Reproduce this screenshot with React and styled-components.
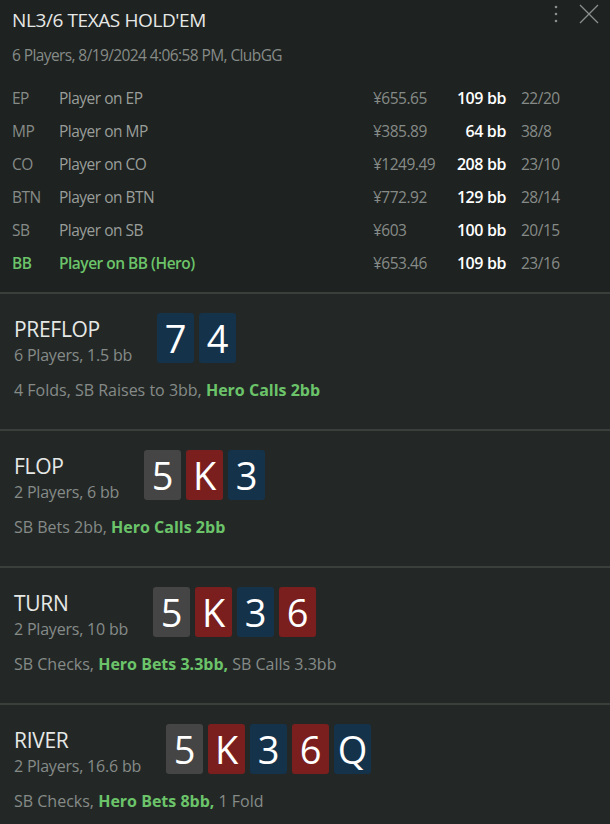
import React from "react";
import styled, {createGlobalStyle} from "styled-components";

const GlobalStyle = createGlobalStyle`
  html, body {
    margin: 0;
    padding: 0;
    background: #1e2220;
  }
  body {
    font-family: "Open Sans", "Noto Sans", sans-serif;
  }
`;

const Panel = styled.div`
  width: 100%;
  height: 824px;
  background: #1e2220;
  overflow: hidden;
  display: flex;
  flex-direction: column;
`;

const Header = styled.div`
  position: relative;
  padding: 6px 12px 13px 12px;
  border-bottom: 2px solid #3a3f3c;
`;

const Title = styled.div`
  font-size: 19px;
  color: #e6e8e6;
  line-height: 28px;
  letter-spacing: -0.4px;
`;

const Subtitle = styled.div`
  font-size: 15.5px;
  color: #868b88;
  line-height: 24px;
  margin-top: 9px;
  letter-spacing: -0.6px;
`;

const Tools = styled.div`
  position: absolute;
  top: 4px;
  right: 11px;
  display: flex;
  align-items: center;
  gap: 20px;
`;

const Players = styled.div`
  margin-top: 14px;
  display: grid;
  grid-template-columns: 47px 314px 70px 63px auto;
  grid-auto-rows: 33px;
  align-items: center;
`;

const Cell = styled.div`
  font-size: 15.5px;
  letter-spacing: -0.5px;
  color: ${p => (p.$hero ? "#6cc46a" : p.$light ? "#9a9e9b" : "#868b88")};
  font-weight: ${p => (p.$hero ? 600 : 400)};
  white-space: nowrap;
`;

const Stat = styled(Cell)`
  padding-left: 15px;
`;

const Stack = styled.div`
  font-size: 16px;
  letter-spacing: -0.4px;
  color: #ffffff;
  font-weight: 600;
  text-align: right;
  white-space: nowrap;
`;

const Street = styled.div`
  background: #232827;
  height: 137px;
  padding: 19px 14px 0 14px;
  border-bottom: 2px solid #3a3f3c;
  box-sizing: border-box;
  flex-shrink: 0;
`;

const StreetTop = styled.div`
  display: flex;
  align-items: flex-start;
  gap: 25px;
`;

const StreetInfo = styled.div`
  display: flex;
  flex-direction: column;
  padding-top: 3px;
`;

const StreetName = styled.div`
  font-size: 21px;
  color: #e6e8e6;
  line-height: 26px;
  letter-spacing: -0.3px;
`;

const StreetSub = styled.div`
  font-size: 16px;
  color: #868b88;
  line-height: 22px;
  margin-top: 2px;
  letter-spacing: -0.2px;
`;

const Cards = styled.div`
  display: flex;
  gap: 5px;
`;

const suitColors = {
  b: "#15324b",
  r: "#7a1f1e",
  g: "#454545",
};

const Card = styled.div`
  width: 37px;
  height: 50px;
  border-radius: 3px;
  background: ${p => suitColors[p.$suit]};
  color: #ffffff;
  font-size: 38px;
  line-height: 50px;
  text-align: center;
`;

const Action = styled.div`
  margin-top: 13px;
  font-size: 16px;
  line-height: 22px;
  color: #868b88;
`;

const Hero = styled.span`
  color: #6cc46a;
  font-weight: 700;
`;

const players = [
  {pos: "EP", name: "Player on EP", money: "¥655.65", bb: "109 bb", stat: "22/20"},
  {pos: "MP", name: "Player on MP", money: "¥385.89", bb: "64 bb", stat: "38/8"},
  {pos: "CO", name: "Player on CO", money: "¥1249.49", bb: "208 bb", stat: "23/10"},
  {pos: "BTN", name: "Player on BTN", money: "¥772.92", bb: "129 bb", stat: "28/14"},
  {pos: "SB", name: "Player on SB", money: "¥603", bb: "100 bb", stat: "20/15"},
  {pos: "BB", name: "Player on BB (Hero)", money: "¥653.46", bb: "109 bb", stat: "23/16", hero: true},
];

const streets = [
  {
    name: "PREFLOP",
    sub: "6 Players, 1.5 bb",
    cards: [["7", "b"], ["4", "b"]],
    action: ["4 Folds, SB Raises to 3bb, ", "Hero Calls 2bb", ""],
  },
  {
    name: "FLOP",
    sub: "2 Players, 6 bb",
    cards: [["5", "g"], ["K", "r"], ["3", "b"]],
    action: ["SB Bets 2bb, ", "Hero Calls 2bb", ""],
  },
  {
    name: "TURN",
    sub: "2 Players, 10 bb",
    cards: [["5", "g"], ["K", "r"], ["3", "b"], ["6", "r"]],
    action: ["SB Checks, ", "Hero Bets 3.3bb,", " SB Calls 3.3bb"],
  },
  {
    name: "RIVER",
    sub: "2 Players, 16.6 bb",
    cards: [["5", "g"], ["K", "r"], ["3", "b"], ["6", "r"], ["Q", "b"]],
    action: ["SB Checks, ", "Hero Bets 8bb,", " 1 Fold"],
  },
];

function MoreIcon() {
  return (
    <svg width="6" height="20" viewBox="0 0 6 20">
      <circle cx="3" cy="3" r="1.3" fill="#8a8f8c"/>
      <circle cx="3" cy="10" r="1.3" fill="#8a8f8c"/>
      <circle cx="3" cy="17" r="1.3" fill="#8a8f8c"/>
    </svg>
  );
}

function CloseIcon() {
  return (
    <svg width="20" height="20" viewBox="0 0 20 20">
      <path d="M1 1 L19 19 M19 1 L1 19" stroke="#8a8f8c" strokeWidth="1.3" fill="none"/>
    </svg>
  );
}

export default function App() {
  return (
    <Panel>
      <GlobalStyle/>
      <Header>
        <Title>NL3/6 TEXAS HOLD'EM</Title>
        <Subtitle>6 Players, 8/19/2024 4:06:58 PM, ClubGG</Subtitle>
        <Tools>
          <MoreIcon/>
          <CloseIcon/>
        </Tools>
        <Players>
          {players.map(p => (
            <React.Fragment key={p.pos}>
              <Cell $hero={p.hero}>{p.pos}</Cell>
              <Cell $hero={p.hero} $light>{p.name}</Cell>
              <Cell>{p.money}</Cell>
              <Stack>{p.bb}</Stack>
              <Stat>{p.stat}</Stat>
            </React.Fragment>
          ))}
        </Players>
      </Header>
      {streets.map(s => (
        <Street key={s.name}>
          <StreetTop>
            <StreetInfo>
              <StreetName>{s.name}</StreetName>
              <StreetSub>{s.sub}</StreetSub>
            </StreetInfo>
            <Cards>
              {s.cards.map(([rank, suit], i) => (
                <Card key={i} $suit={suit}>{rank}</Card>
              ))}
            </Cards>
          </StreetTop>
          <Action>
            {s.action[0]}<Hero>{s.action[1]}</Hero>{s.action[2]}
          </Action>
        </Street>
      ))}
    </Panel>
  );
}
